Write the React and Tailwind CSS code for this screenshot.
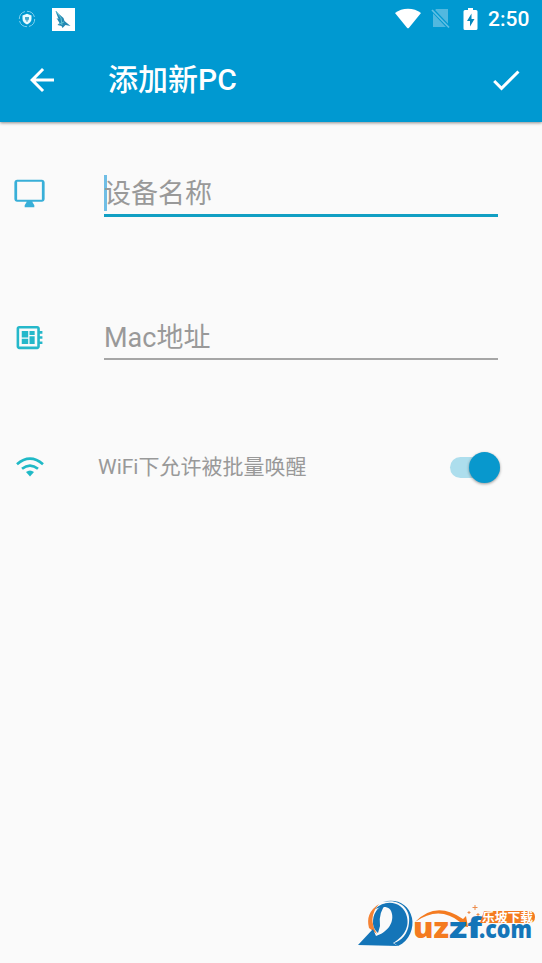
import React from "react";

const FONT = "font-[Roboto,'Noto_Sans_CJK_SC',sans-serif]";

function StatusBar() {
  return (
    <div className="flex h-[38px] items-center text-white">
      <svg className="ml-[18px] h-[20px] w-[18px] shrink-0" viewBox="0 0 18 20">
        <circle cx="9" cy="10" r="7.7" fill="none" stroke="#7fd0ee" strokeWidth="1" strokeDasharray="10 2" />
        <path d="M4.5 6.5L9 4.8l4.5 1.7v3.2c0 2.8-1.9 4.6-4.5 5.8-2.6-1.2-4.5-3-4.5-5.8z" fill="#e9fbff" />
        <path d="M7 8h4v1.8a2 2 0 0 1-4 0zM8.5 11h1v2h-1z" fill="#4aa9cc" />
      </svg>
      <svg className="ml-[16px] h-[23px] w-[23px] shrink-0" viewBox="0 0 23 23">
        <path d="M0 0h23v23H0z" fill="#fff" />
        <path d="M3.5 3l8 7 1 3 6 5-5-1-3 3-1-2-4-1 2-2-3-5 2 1z" fill="#2588b2" />
        <path d="M4 3l5 7 1 7M7 16l5-2" fill="none" stroke="#62c4d5" strokeWidth="1" />
      </svg>
      <svg className="ml-auto h-[22px] w-[28px]" viewBox="0 0 28 22">
        <path d="M1 5.1C8-.6 20-.6 27 5.1L15 19.8q-1 1-2 0z" fill="#fff" />
      </svg>
      <svg className="ml-[8px] h-[22px] w-[21px]" viewBox="0 0 21 22">
        <path d="M6 1h12v18H3V5z" fill="#51b8df" />
        <path d="M2 1.5l17 18" stroke="#0099d0" strokeWidth="4" />
        <path d="M2 2l17 17.5" stroke="#62c0e4" strokeWidth="1.7" />
      </svg>
      <svg className="ml-[12px] h-[24px] w-[16px]" viewBox="0 0 16 24">
        <path d="M5 1h5v2h3q1.5 0 1.5 1.5v17Q14.500 23 13 23H2Q.5 23 .5 21.500v-17Q.5 3 2 3h3z" fill="#fff" />
        <path d="M8.500 6.500L4 14h3v5.500L11.500 12h-3z" fill="#0588bd" />
      </svg>
      <span className="mr-[12px] ml-[9px] w-[42px] text-[21px] leading-[24px] font-medium whitespace-nowrap">2:50</span>
    </div>
  );
}

function Header() {
  return (
    <header className="h-[122px] bg-[#0099d1] shadow-[0_1px_3px_rgba(0,0,0,0.45)]">
      <StatusBar />
      <div className="flex h-[84px] items-center text-white">
        <svg className="ml-[24px] size-[36px]" viewBox="0 0 24 24" fill="currentColor">
          <path d="M20 11H7.830l5.590-5.590L12 4l-8 8 8 8 1.410-1.410L7.830 13H20z" />
        </svg>
        <h1 className="ml-[48px] text-[30px] leading-[36px] font-medium whitespace-nowrap">添加新PC</h1>
        <svg className="mr-[18px] ml-auto size-[36px]" viewBox="0 0 24 24" fill="currentColor">
          <path d="M9 16.170L4.830 12l-1.420 1.410L9 19 21 7l-1.410-1.410z" />
        </svg>
      </div>
    </header>
  );
}

function Watermark() {
  return (
    <svg className="absolute top-[895px] left-[355px] h-[60px] w-[187px]" viewBox="355 895 187 60">
      <path d="M379 904q-14 9-10 24l8 6q-10-16 2-30z" fill="#f58233" />
      <path d="M373 924q-1-15 14-21-9 9-7 23l-2 7q-4-3-5-9z" fill="#1475b8" />
      <path d="M375 909c11-11 29-7 32 8 3 13-7 22-14 26l5 3-40-1 15-16 3 7c10-3 18-12 16-22-1-7-7-9-17-5z" fill="#1475b8" />
      <path d="M383 902c17-4 28 7 26 21-1 11-8 18-15 20l4 3c12-5 16-19 14-28-3-14-16-20-29-16z" fill="#1475b8" />
      <path d="M415 922q21-22 48-3l3-3 2 11-12-2 4-3q-21-17-45 0z" fill="#f47b20" />
      <g fontFamily="'Open Sans', 'DejaVu Sans', sans-serif" fontWeight="800" fontSize="28">
        <text x="413" y="938" textLength="36" lengthAdjust="spacingAndGlyphs" fill="#f47b20">uz</text>
        <text x="449" y="938" textLength="33" lengthAdjust="spacingAndGlyphs" fill="#1475b8">zf</text>
        <text x="479" y="938" textLength="53" lengthAdjust="spacingAndGlyphs" fontSize="25" fill="#1475b8">.com</text>
      </g>
      <path d="M484 911h45q6 0 6 6t-6 6h-49z" fill="#f47b20" />
      <text x="482" y="922" textLength="51" lengthAdjust="spacingAndGlyphs" fontFamily="'Noto Sans CJK SC', sans-serif" fontWeight="700" fontSize="12" fill="#fff">乐坡下载</text>
      <path d="M475 905v5m-2.500-2.500h5M469 911v3m-1.500-1.500h3M478 913v3m-1.500-1.500h3" stroke="#ed8c4b" strokeWidth="1" />
    </svg>
  );
}

export default function App() {
  return (
    <main className={`relative flex h-[963px] w-[542px] flex-col overflow-hidden bg-[#fafafa] text-[#999] ${FONT}`}>
      <Header />
      <section className="mt-[48px] flex h-[48px]">
        <svg className="mt-[7px] ml-[13px] size-[33px]" viewBox="0 0 24 24" fill="#38afd8">
          <path d="M21 2H3c-1.100 0-2 .9-2 2v12c0 1.100.9 2 2 2h7l-1.500 2.500V22h7v-1.500L14 18h7c1.100 0 2-.9 2-2V4c0-1.100-.9-2-2-2zm0 14.500H3v-13h18z" />
        </svg>
        <div className="ml-[58px] flex h-[47px] w-[394px] items-center border-b-3 border-[#119fc3]">
          <div className="mt-[2px] h-[36px] w-[3px] shrink-0 bg-[#70bee5]" />
          <span className="-ml-[3px] pt-[3px] text-[27px] leading-[36px] whitespace-nowrap">设备名称</span>
        </div>
      </section>
      <section className="mt-[96px] flex h-[48px]">
        <svg className="mt-[8px] ml-[14px] size-[31px]" viewBox="0 0 24 24" fill="#25b8ca">
          <path d="M22 9V7h-2V5c0-1.100-.9-2-2-2H4c-1.100 0-2 .9-2 2v14c0 1.100.9 2 2 2h14c1.100 0 2-.9 2-2v-2h2v-2h-2v-2h2v-2h-2V9zm-4 10H4V5h14zM6 13h5v4H6zm6-6h4v3h-4zM6 7h5v5H6zm6 4h4v6h-4z" />
        </svg>
        <div className="ml-[59px] flex h-[46px] w-[394px] items-center border-b-2 border-[#a6a6a6]">
          <span className="pt-[3px] text-[27px] leading-[36px] whitespace-nowrap">Mac地址</span>
        </div>
      </section>
      <section className="mt-[81px] flex h-[48px] items-center">
        <svg className="ml-[16px] h-[22px] w-[28px]" viewBox="0 0 28 22" fill="none" stroke="#1fb9c6" strokeWidth="2.700">
          <path d="M1 8.200q13-11 26 0M6 12.800q8-6.500 16 0" />
          <path d="M10 16q4-3 8 0l-4 4.500z" fill="#1fb9c6" stroke="none" />
        </svg>
        <span className="ml-[54px] text-[21px] leading-[28px] whitespace-nowrap">WiFi下允许被批量唤醒</span>
        <div className="mr-[42px] ml-auto flex h-[21px] w-[50px] items-center justify-end rounded-full bg-[#addeed]">
          <div className="size-[31px] shrink-0 rounded-full bg-[#0898cd] shadow-[0_1px_3px_rgba(0,0,0,0.4)]" />
        </div>
      </section>
      <Watermark />
    </main>
  );
}
